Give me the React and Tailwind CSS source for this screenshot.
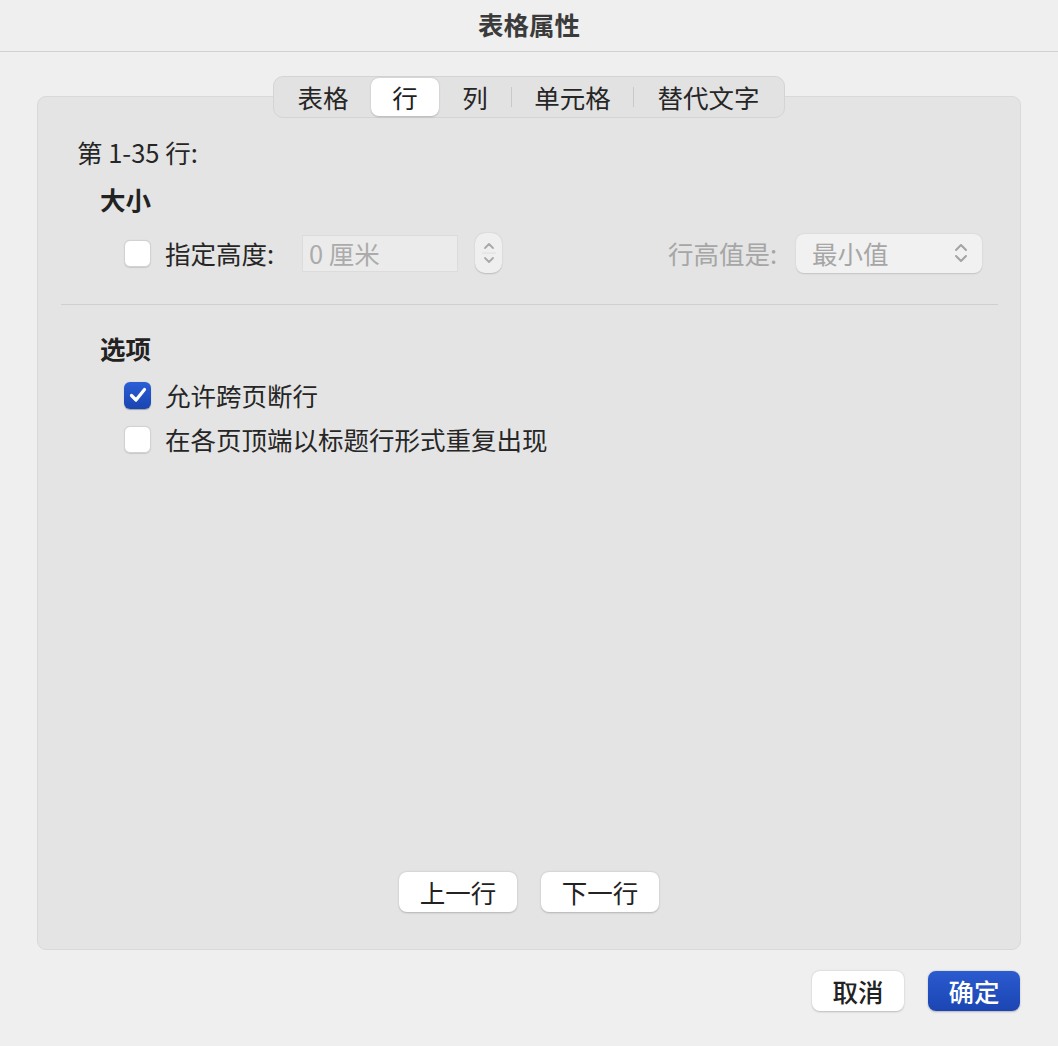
import React from "react";

const font = { fontFamily: '"Noto Sans CJK SC", "Noto Sans", sans-serif' };

function Checkbox({ checked }) {
  if (checked) {
    return (
      <div className="w-[27px] h-[27px] rounded-[6px] bg-gradient-to-b from-[#2a5fd6] to-[#1a44b0] flex items-center justify-center shadow-[0_0.5px_1px_rgba(0,0,0,0.3)] shrink-0">
        <svg width="18" height="16" viewBox="0 0 18 16" fill="none">
          <path d="M2.5 8.5 L7 13 L15.5 2.5" stroke="white" strokeWidth="3.2" strokeLinecap="round" strokeLinejoin="round" />
        </svg>
      </div>
    );
  }
  return (
    <div className="w-[27px] h-[27px] rounded-[6px] bg-white border border-[#d2d2d2] shadow-[0_0.5px_1px_rgba(0,0,0,0.12)] shrink-0" />
  );
}

function Tab({ children, w, selected }) {
  return (
    <div
      className={
        "h-[38px] flex items-center justify-center text-[25.5px] leading-[32px] " +
        (selected ? "bg-white rounded-[8px] shadow-[0_0.5px_2px_rgba(0,0,0,0.2)] text-[#1e1e1e]" : "text-[#262626]")
      }
      style={{ width: w }}
    >
      {children}
    </div>
  );
}

function Divider() {
  return <div className="w-px h-[20px] bg-[#c9c9c9] shrink-0" />;
}

export default function App() {
  return (
    <div className="w-[1058px] h-[1046px] bg-[#efefef] flex flex-col text-[#262626]" style={font}>
      <div className="h-[52px] shrink-0 border-b border-[#d2d2d2] flex items-center justify-center">
        <span className="text-[25.5px] font-bold text-[#3b3b3b] leading-[32px] -mt-[4px]">表格属性</span>
      </div>

      <div className="px-[37px] pt-[44px]">
        <div className="relative h-[854px] bg-[#e4e4e4] border border-[#d9d9d9] rounded-[9px] flex flex-col">
          <div className="absolute -top-[21px] left-0 right-0 flex justify-center">
            <div className="flex items-center h-[42px] px-[1px] bg-[#e2e2e2] border border-[#d4d4d4] rounded-[10px]">
              <Tab w={96}>表格</Tab>
              <Tab w={68} selected>行</Tab>
              <Tab w={72}>列</Tab>
              <Divider />
              <Tab w={121}>单元格</Tab>
              <Divider />
              <Tab w={149}>替代文字</Tab>
            </div>
          </div>

          <div className="pl-[39px] pt-[39px] text-[25.5px] leading-[32px]">第 1-35 行:</div>
          <div className="pl-[62px] mt-[15px] text-[25.5px] leading-[32px] font-bold text-[#222]">大小</div>

          <div className="mt-[18px] pl-[86px] pr-[38px] flex items-center h-[40px]">
            <Checkbox />
            <span className="ml-[14px] w-[110px] text-[25.5px] leading-[32px] whitespace-nowrap">指定高度:</span>
            <div className="ml-[27px] w-[156px] h-[37px] bg-[#ebebeb] border border-[#dcdcdc] flex items-center pl-[6px] text-[25.5px] leading-[32px] text-[#ababab]">
              0 厘米
            </div>
            <div className="ml-[17px] w-[27px] h-[40px] rounded-[10px] bg-[#efefef] shadow-[0_0.5px_1.5px_rgba(0,0,0,0.18)] flex flex-col items-center justify-center">
              <svg width="14" height="34" viewBox="0 0 14 34" fill="none">
                <path d="M3 12 L7 8 L11 12" stroke="#a9a9a9" strokeWidth="1.8" strokeLinecap="round" strokeLinejoin="round" />
                <line x1="0" y1="17" x2="14" y2="17" stroke="#dedede" strokeWidth="1" />
                <path d="M3 22 L7 26 L11 22" stroke="#a9a9a9" strokeWidth="1.8" strokeLinecap="round" strokeLinejoin="round" />
              </svg>
            </div>
            <div className="flex-1" />
            <span className="text-[25.5px] leading-[32px] text-[#a6a6a6] whitespace-nowrap">行高值是:</span>
            <div className="ml-[19px] w-[186px] h-[39px] rounded-[8px] bg-[#f1f1f1] shadow-[0_0.5px_1.5px_rgba(0,0,0,0.15)] flex items-center justify-between pl-[16px] pr-[13px] text-[25.5px] leading-[32px] text-[#a6a6a6]">
              <span>最小值</span>
              <svg width="16" height="24" viewBox="0 0 16 24" fill="none">
                <path d="M3 9 L8 4 L13 9" stroke="#a3a3a3" strokeWidth="2" strokeLinecap="round" strokeLinejoin="round" />
                <path d="M3 15 L8 20 L13 15" stroke="#a3a3a3" strokeWidth="2" strokeLinecap="round" strokeLinejoin="round" />
              </svg>
            </div>
          </div>

          <div className="mt-[31px] ml-[23px] mr-[22px] h-px bg-[#cfcfcf]" />

          <div className="pl-[62px] mt-[27px] text-[25.5px] leading-[32px] font-bold text-[#222]">选项</div>
          <div className="mt-[9px] pl-[86px] flex flex-col">
            <div className="h-[44px] flex items-center">
              <Checkbox checked />
              <span className="ml-[14px] text-[25.5px] leading-[32px]">允许跨页断行</span>
            </div>
            <div className="h-[44px] flex items-center">
              <Checkbox />
              <span className="ml-[14px] text-[25.5px] leading-[32px]">在各页顶端以标题行形式重复出现</span>
            </div>
          </div>

          <div className="flex-1" />
          <div className="flex justify-center gap-[24px] pb-[37px]">
            <div className="w-[118px] h-[40px] rounded-[8px] bg-white shadow-[0_0.5px_2px_rgba(0,0,0,0.22)] flex items-center justify-center text-[25.5px] leading-[32px] text-[#222]">
              上一行
            </div>
            <div className="w-[118px] h-[40px] rounded-[8px] bg-white shadow-[0_0.5px_2px_rgba(0,0,0,0.22)] flex items-center justify-center text-[25.5px] leading-[32px] text-[#222]">
              下一行
            </div>
          </div>
        </div>
      </div>

      <div className="flex justify-end gap-[24px] pr-[38px] mt-[21px]">
        <div className="w-[92px] h-[40px] rounded-[8px] bg-white shadow-[0_0.5px_2px_rgba(0,0,0,0.22)] flex items-center justify-center text-[25.5px] leading-[32px] font-medium text-[#222]">
          取消
        </div>
        <div className="w-[92px] h-[40px] rounded-[8px] bg-gradient-to-b from-[#2b5bd0] to-[#1b45b2] shadow-[0_0.5px_2px_rgba(0,0,0,0.25)] flex items-center justify-center text-[25.5px] leading-[32px] font-medium text-white">
          确定
        </div>
      </div>
    </div>
  );
}
